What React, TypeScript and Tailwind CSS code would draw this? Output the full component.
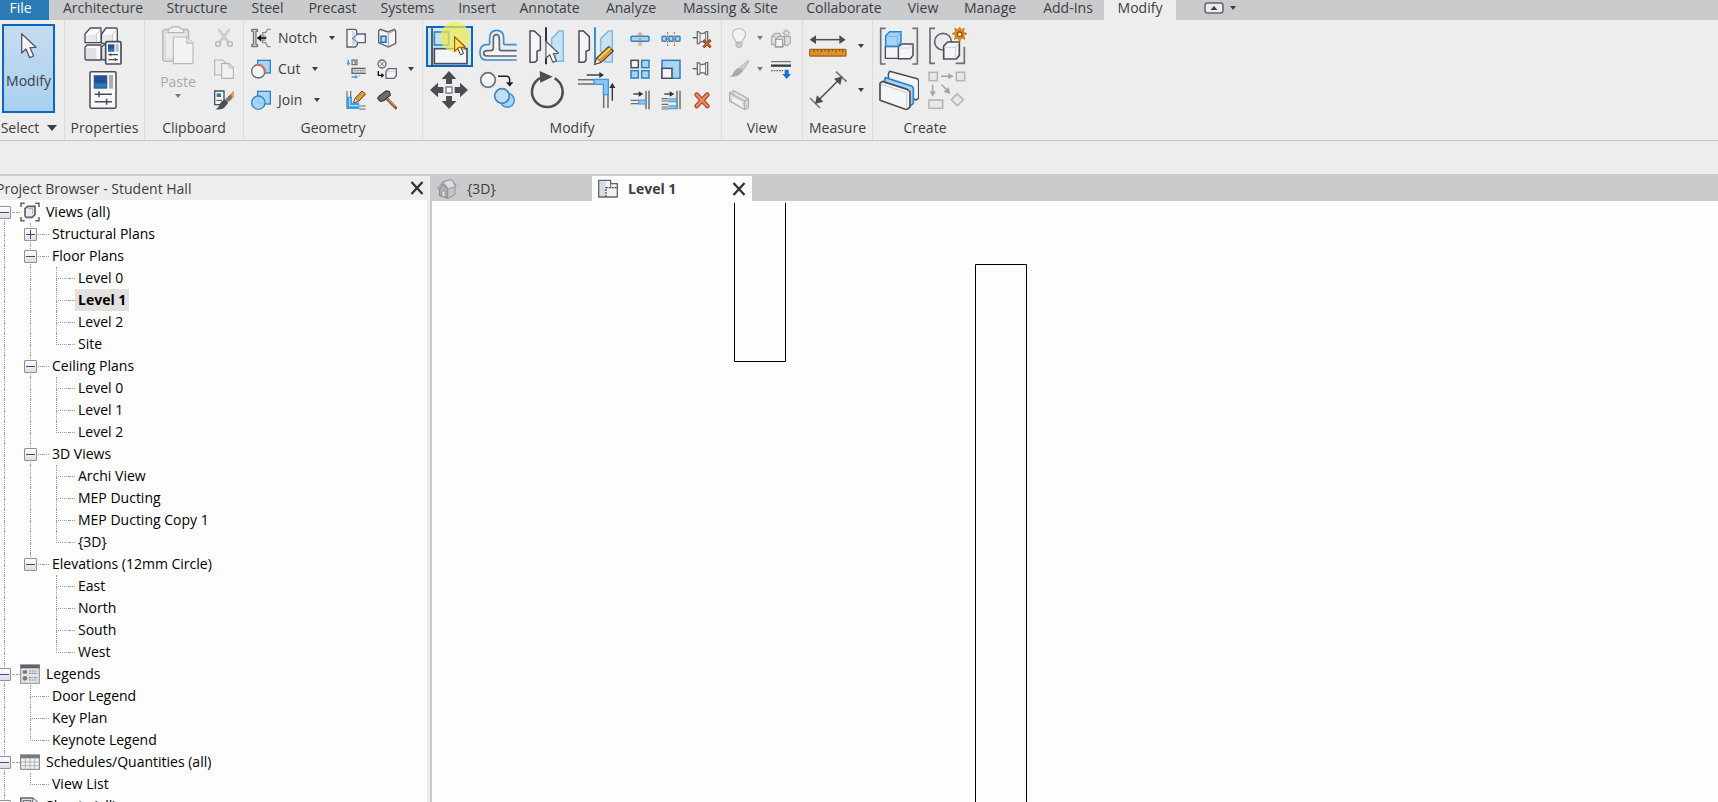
import type { ReactNode } from "react";

const INK = "#4a4d54";
const BLUE = "#2a86d0";
const SKY = "#a9d3f3";
const PALE = "#f4f5f8";
const MUTE = "#b4b4b4";

type IconProps = { children: ReactNode };

const Large = ({ children }: IconProps) => (
  <svg viewBox="0 0 120 120" className="block size-10 shrink-0" fill="none" aria-hidden="true">
    {children}
  </svg>
);

const Small = ({ children }: IconProps) => (
  <svg viewBox="0 0 60 60" className="block size-5 shrink-0" fill="none" aria-hidden="true">
    {children}
  </svg>
);

const Caret = ({ dim = false, wide = false }: { dim?: boolean; wide?: boolean }) => (
  <svg
    viewBox="0 0 10 6"
    className={wide ? "block h-[6px] w-[10px] shrink-0" : "block h-1 w-[6px] shrink-0"}
    preserveAspectRatio="none"
    aria-hidden="true"
  >
    <path d="M0 0H10L5 6Z" fill={dim ? "#77797d" : "#3b3d42"} />
  </svg>
);

const Pointer = ({ fill = "#f6f6f6" }: { fill?: string }) => (
  <path
    d="M2 2V60L15 48L26 74L38 69L27 44L45 43Z"
    fill={fill}
    stroke="#55585e"
    strokeWidth="4"
    strokeLinejoin="round"
  />
);

/* ---------- large icons ---------- */

const TypePropertiesIcon = () => (
  <Large>
    <g fill="#fbfbfc" stroke={INK} strokeWidth="4" strokeLinejoin="round">
      <path d="M6 24L22 6H54V50H6Z" />
      <path d="M56 24L69 6H98Q103 6 103 12V52H56Z" />
      <path d="M6 64L12 57H54V102H12Q6 102 6 96Z" />
      <path d="M56 64L62 57H100V102H62Q56 102 56 96Z" />
    </g>
    <path d="M9 26H40V48H9ZM58 26H88V48H58Z" fill="#e9eaed" />
    <path d="M9 66H40V99H12L9 96ZM58 66H70V99H60Z" fill="#dfe1e5" />
    <path d="M40 26L52 12M40 26V48M88 26L100 12M88 26V46" stroke="#bfc2c8" strokeWidth="3" />
    <rect x="68" y="47" width="46" height="67" rx="4" fill="#fbfbfb" stroke={INK} strokeWidth="5" />
    <rect x="75" y="55" width="19" height="22" fill="#254f91" />
    <rect x="77" y="68" width="15" height="7" fill="#2a7ab5" />
    <rect x="98" y="54" width="9" height="23" fill="#b9bcc2" />
    <path d="M76 86H105M83 82V91M76 101H105M97 96V105" stroke={INK} strokeWidth="3.5" />
  </Large>
);

const PropertiesIcon = () => (
  <Large>
    <rect x="21" y="5" width="78" height="110" rx="4" fill="#f7f8fa" stroke={INK} strokeWidth="4.5" />
    <rect x="33" y="16" width="39" height="39" fill="#254f91" stroke="#5b6d8c" strokeWidth="2" />
    <path d="M35 40H70V53H35Z" fill="#2a7ab5" />
    <rect x="78" y="15" width="12" height="41" fill="#a9adb4" />
    <path d="M35 73H87M48 64V82M35 95H87M71 86V104" stroke={INK} strokeWidth="4.5" />
  </Large>
);

const PasteIcon = () => (
  <Large>
    <rect x="14" y="10" width="78" height="96" rx="7" fill="#dcdcdc" stroke="#b9b9b9" strokeWidth="4" />
    <rect x="24" y="20" width="58" height="76" fill="#ececec" />
    <path d="M30 20V12Q30 8 38 8Q40 2 53 2Q66 2 68 8Q77 8 77 12V20Z" fill="#f1f1f1" stroke="#b5b5b5" strokeWidth="3.5" />
    <path d="M46 33H86L105 52V113H46Z" fill="#f3f3f3" stroke="#b9b9b9" strokeWidth="3.5" />
    <path d="M86 33V52H105" fill="#e2e2e2" stroke="#b9b9b9" strokeWidth="3" />
  </Large>
);

const AlignIcon = () => (
  <Large>
    <path d="M6 4V116" stroke="#3f4248" strokeWidth="5" />
    <rect x="13" y="15" width="43" height="39" fill="#bfe0f6" stroke={BLUE} strokeWidth="5" />
    <rect x="13" y="65" width="98" height="45" fill={PALE} stroke={INK} strokeWidth="5" />
  </Large>
);

const OffsetIcon = () => (
  <Large>
    <path
      d="M116 56H82Q77 56 77 50V36Q77 13 56 13Q35 13 35 36V50Q35 56 29 56H26Q6 56 6 80Q6 102 26 102H116"
      stroke="#3f8fcd"
      strokeWidth="5"
    />
    <path
      d="M116 74H70Q64 74 64 67V40Q64 26 55 26Q46 26 46 40V66Q46 74 38 74H27Q17 74 17 82Q17 90 27 90H116"
      fill={PALE}
      stroke="#63666d"
      strokeWidth="5"
    />
  </Large>
);

const MirrorPickIcon = () => (
  <Large>
    <path d="M9 15H22L40 32V72L30 76V103L24 109H9Z" fill={PALE} stroke={INK} strokeWidth="4.5" />
    <path d="M109 15H96L74 38V72L86 80V106H109Z" fill="#c8e2f4" stroke="#7dbbe6" strokeWidth="4.5" />
    <path d="M57 4V46M57 96V115" stroke="#303237" strokeWidth="6" />
    <g transform="translate(55 44) scale(0.88)">
      <Pointer />
    </g>
  </Large>
);

const MirrorDrawIcon = () => (
  <Large>
    <path d="M9 15H22L40 32V72L30 76V103L24 109H9Z" fill={PALE} stroke={INK} strokeWidth="4.5" />
    <path d="M109 15H98L74 38V76L86 84V108H109Z" fill="#c8e2f4" stroke="#7dbbe6" strokeWidth="4.5" />
    <path d="M57 4V112" stroke="#3f8fcd" strokeWidth="6" />
    <path d="M56 115L62 96L98 62L112 75L76 109Z" fill="#e79a2b" stroke="#5a4526" strokeWidth="3.5" />
    <path d="M68 98L103 66" stroke="#ffd77c" strokeWidth="4" />
    <path d="M56 115L62 96L76 109Z" fill="#f7e7c8" stroke="#4a4d54" strokeWidth="3" />
  </Large>
);

const MoveIcon = () => (
  <Large>
    <g fill={INK}>
      <path d="M60 3L82 27H69V42H51V27H38Z" />
      <path d="M60 117L82 93H69V78H51V93H38Z" />
      <path d="M3 60L27 38V51H43V69H27V82Z" />
      <path d="M117 60L93 38V51H77V69H93V82Z" />
    </g>
    <rect x="51" y="51" width="18" height="18" fill="#fff" stroke="#74777d" strokeWidth="4" />
  </Large>
);

const CopyIcon = () => (
  <Large>
    <circle cx="30" cy="30" r="22" fill="#f3f3f5" stroke="#6a6d73" strokeWidth="5" />
    <path d="M60 19H86Q95 19 95 28V40" stroke="#222" strokeWidth="4.5" />
    <path d="M84 37H106L95 50Z" fill="#222" />
    <circle cx="88" cy="91" r="21" fill={SKY} stroke="#3f95d6" strokeWidth="4.5" />
    <circle cx="72" cy="78" r="22" fill="#c0dff5" stroke="#3f85bf" strokeWidth="5" />
  </Large>
);

const RotateIcon = () => (
  <Large>
    <path d="M83 25A46 46 0 1 1 43 23" stroke={INK} strokeWidth="7.5" />
    <path d="M38 3L77 20L40 38Z" fill={INK} />
  </Large>
);

const TrimIcon = () => (
  <Large>
    <path d="M32 15H72" stroke="#303237" strokeWidth="4" />
    <path d="M70 6L84 15L70 24Z" fill="#303237" />
    <path d="M6 29H54M6 42H54M83 74V114M96 74V114" stroke="#6b6e74" strokeWidth="4.5" />
    <path d="M54 28H97V74H82V43H54Z" fill="#8cc6f0" stroke="#3c9be4" strokeWidth="4" />
    <path d="M109 92V52" stroke="#303237" strokeWidth="4" />
    <path d="M100 54L109 38L118 54Z" fill="#303237" />
  </Large>
);

const MeasureIcon = () => (
  <Large>
    <path d="M18 41H98" stroke={INK} strokeWidth="4.5" />
    <path d="M5 41L24 28V54ZM113 41L94 28V54Z" fill={INK} />
    <rect x="5" y="70" width="109" height="20" rx="2" fill="#dc9430" stroke="#a9691b" strokeWidth="4" />
    <path d="M18 70V79M29 70V76M40 70V79M51 70V76M62 70V79M73 70V76M84 70V79M95 70V76M104 70V79" stroke="#7a4a12" strokeWidth="3" />
  </Large>
);

const DimensionIcon = () => (
  <Large>
    <path d="M6 84L36 114M84 5L116 35" stroke="#707378" strokeWidth="4.5" />
    <path d="M30 92L92 30" stroke={INK} strokeWidth="4.5" />
    <path d="M21 102L27 76L46 95ZM103 19L97 45L78 26Z" fill={INK} />
  </Large>
);

const GroupIcon = () => (
  <Large>
    <path d="M20 7H5V114H20M100 7H115V114H100" stroke="#6d7076" strokeWidth="5" />
    <path d="M19 62H60V97H19Z" fill={PALE} stroke={INK} strokeWidth="4" />
    <path d="M58 62L70 54H102V88L94 98H58Z" fill={PALE} stroke={INK} strokeWidth="4.5" />
    <path d="M59 66H92L101 56" stroke="#d3d5d9" strokeWidth="3" />
    <path d="M20 29L32 17H66V49L57 61H20Z" fill={SKY} stroke={BLUE} strokeWidth="4.5" />
    <path d="M21 31H55L65 19M55 31V60" stroke="#6db5e8" strokeWidth="3" />
  </Large>
);

const AssemblyIcon = () => (
  <Large>
    <path d="M24 7H9V112H24M86 112H112V62" stroke="#6d7076" strokeWidth="5" />
    <circle cx="48" cy="47" r="25" fill="#e9ebee" stroke="#63666c" strokeWidth="5" />
    <path d="M50 60L62 48H97V88L88 99H50Z" fill={PALE} stroke={INK} strokeWidth="5" />
    <path d="M52 64H85L96 50M86 64V97" stroke="#cfd2d7" strokeWidth="3" />
    <path
      d="M98 3L102 12L112 7L109 18L121 23L110 28L114 40L103 36L98 47L93 36L82 40L86 28L75 23L86 18L83 7L94 12Z"
      fill="#e58a1c"
      stroke="#b9650e"
      strokeWidth="2"
    />
    <circle cx="98" cy="25" r="7" fill="#fff3b8" stroke="#a04b0a" strokeWidth="4" />
  </Large>
);

const PartsIcon = () => (
  <Large>
    <path d="M28 12L32 4L115 26L119 32V84L112 90L30 62Z" fill={PALE} stroke={INK} strokeWidth="4.5" strokeLinejoin="round" />
    <path d="M17 30L19 23L98 48L103 54V100L96 106L20 76Z" fill={SKY} stroke={BLUE} strokeWidth="5" strokeLinejoin="round" />
    <path d="M3 40L10 34L85 58L93 65V111L83 119L3 91Z" fill={PALE} stroke={INK} strokeWidth="5" strokeLinejoin="round" />
    <path d="M5 42L83 68V117M83 68L91 62" stroke="#c9ccd2" strokeWidth="3" />
  </Large>
);

const SimilarIcon = () => (
  <Large>
    <g fill="#e8e8e8" stroke={MUTE} strokeWidth="4.5">
      <rect x="6" y="7" width="25" height="25" />
      <rect x="88" y="7" width="25" height="25" />
      <rect x="6" y="90" width="41" height="25" />
      <path d="M91 71L109 89L91 107L73 89Z" />
    </g>
    <path d="M42 19H66M17 44V66M44 44L60 60" stroke="#a4a4a4" strokeWidth="4.5" />
    <path d="M64 10L80 19L64 28ZM8 64H26L17 80ZM70 72L50 66L65 52Z" fill="#a4a4a4" />
  </Large>
);

/* ---------- small icons ---------- */

const ScissorsIcon = () => (
  <Small>
    <path d="M14 4L42 42M46 4L18 42" stroke="#bdbdbd" strokeWidth="7" />
    <path d="M15 6L40 40M45 6L20 40" stroke="#ececec" strokeWidth="2" />
    <circle cx="12" cy="48" r="7" stroke={MUTE} strokeWidth="4" />
    <circle cx="48" cy="48" r="7" stroke={MUTE} strokeWidth="4" />
  </Small>
);

const CopyClipIcon = () => (
  <Small>
    <path d="M2 3H26L36 13V48H2Z" fill="#ededed" stroke={MUTE} strokeWidth="3.5" />
    <path d="M23 14H46L58 26V58H23Z" fill="#f2f2f2" stroke={MUTE} strokeWidth="3.5" />
    <path d="M45 14V27H58" stroke={MUTE} strokeWidth="3" />
  </Small>
);

const MatchTypeIcon = () => (
  <Small>
    <path d="M2 3H30V40L26 44H2Z" fill="#f7f8fa" stroke={INK} strokeWidth="4" />
    <rect x="8" y="10" width="13" height="11" fill="#2a7ab5" />
    <path d="M7 31H24" stroke={INK} strokeWidth="3" />
    <path d="M59 3L38 26L46 35L60 20Z" fill="#d98734" />
    <path d="M60 3V16L42 36L34 28Z" fill="#707378" />
    <path d="M50 12L60 3V22L56 24Z" fill="#ee9a4a" />
    <path d="M33 28L43 38L30 54Q20 60 4 58Q14 54 16 46Q20 34 33 28Z" fill="#4c4f55" />
  </Small>
);

const NotchIcon = () => (
  <Small>
    <path d="M2 4H20V10H15V50H20V56H2V50H7V10H2Z" fill="#c9cbcf" stroke="#5b5e64" strokeWidth="3" />
    <path d="M59 4H50L44 14H35V24H44M59 56H50L44 44H35V36H44" stroke="#8b8e94" strokeWidth="4" />
    <path d="M20 30H46" stroke="#111" strokeWidth="5" />
    <path d="M18 30L31 19V41Z" fill="#111" />
  </Small>
);

const CutIcon = () => (
  <Small>
    <rect x="20" y="4" width="38" height="38" fill={SKY} stroke={BLUE} strokeWidth="4" />
    <circle cx="22" cy="37" r="20" fill="#f6f6f8" stroke="#63666c" strokeWidth="4" />
    <path d="M18 18Q40 16 41 42" stroke="#e8694a" strokeWidth="6" />
  </Small>
);

const JoinIcon = () => (
  <Small>
    <rect x="20" y="4" width="38" height="38" fill={SKY} stroke={BLUE} strokeWidth="4" />
    <circle cx="22" cy="38" r="20" fill={SKY} stroke={BLUE} strokeWidth="4" />
    <path d="M22 20V40H40" stroke="#8dc1ea" strokeWidth="3" />
  </Small>
);

const CopeIcon = () => (
  <Small>
    <path d="M3 4H28L32 8V18H58V44H34V50L28 57H3Z" fill={PALE} stroke="#5c5f65" strokeWidth="4" />
    <path d="M18 4L30 18V44L18 56" fill="#d4d7dc" />
    <path d="M34 20L20 31L34 42" stroke={BLUE} strokeWidth="3.5" strokeDasharray="6 2" />
  </Small>
);

const WallOpeningIcon = () => (
  <Small>
    <path d="M5 8L10 4L32 12L52 4L56 8V46L34 57L5 44Z" fill={PALE} stroke="#5c5f65" strokeWidth="4" />
    <path d="M34 16V55M34 16L54 8" stroke="#a4a8af" strokeWidth="3" />
    <path d="M12 25H27V43H12Z" fill="#b7dcf6" stroke="#2a6eb0" strokeWidth="4.5" />
  </Small>
);

const BeamJoinIcon = () => (
  <Small>
    <path d="M7 2V14M40 48V50M17 54H30" stroke="#3c9be4" strokeWidth="4" />
    <path d="M1 11H13L7 20ZM28 47L36 54L28 60Z" fill="#3c9be4" />
    <rect x="18" y="3" width="15" height="14" fill="#e5e6e9" stroke="#6b6e74" strokeWidth="3.5" />
    <path d="M23 7H28V15" stroke="#6b6e74" strokeWidth="3" />
    <path d="M59 28H18V43H59" fill="#d4d6da" stroke="#5c5f65" strokeWidth="4" />
    <path d="M25 35H59" stroke="#7c7f85" strokeWidth="3" strokeDasharray="5 3" />
  </Small>
);

const PaintIcon = () => (
  <Small>
    <circle cx="15" cy="15" r="12" fill="#e4e5e8" stroke="#6b6e74" strokeWidth="4" />
    <path d="M8 8L22 22M22 8L8 22" stroke="#8b8e94" strokeWidth="3" />
    <path d="M4 36V49H15" stroke="#111" strokeWidth="4" />
    <path d="M13 42L22 49L13 57Z" fill="#111" />
    <path d="M27 37L34 29H58V50L51 58H27Z" fill={PALE} stroke="#63666c" strokeWidth="4" />
    <path d="M29 38H50L57 31" stroke="#c4c7cc" strokeWidth="3" />
  </Small>
);

const WallJoinIcon = () => (
  <Small>
    <path d="M3 3V57M14 3V48H59M59 57H40" stroke="#6b6e74" strokeWidth="3.5" />
    <path d="M3 20V57H40V38H18V20Z" fill="#3c9be4" />
    <path d="M11 24V47H38" stroke="#b7dcf6" strokeWidth="3.5" />
    <path d="M23 38L28 24L48 3L59 12L38 34Z" fill="#e79a2b" stroke="#5a4526" strokeWidth="3" />
    <path d="M23 38L28 25L37 34Z" fill="#fff0d0" stroke="#5a4526" strokeWidth="2" />
  </Small>
);

const DemolishIcon = () => (
  <Small>
    <path d="M29 25L57 54" stroke="#8a5a2c" strokeWidth="9" strokeLinecap="round" />
    <path d="M30 24L55 50" stroke="#e3b06c" strokeWidth="3" />
    <path d="M2 25L8 17L27 3L37 5L40 15L20 32L10 34Z" fill="#6a6d73" stroke="#3d4046" strokeWidth="4" strokeLinejoin="round" />
  </Small>
);

const SplitIcon = ({ gap = false }: { gap?: boolean }) => (
  <Small>
    {gap ? (
      <g fill={SKY} stroke="#3487c4" strokeWidth="4.5">
        <rect x="3" y="25" width="13" height="15" rx="3" />
        <rect x="24" y="25" width="12" height="15" rx="1" />
        <rect x="43" y="25" width="14" height="15" rx="3" />
      </g>
    ) : (
      <rect x="3" y="25" width="54" height="15" rx="3" fill={SKY} stroke="#3487c4" strokeWidth="4.5" />
    )}
    <path d={gap ? "M20 12V54M40 12V54" : "M30 12V54"} stroke="#c26742" strokeWidth="3" strokeDasharray="6 3" />
    {!gap && <path d="M23 16L28 21M37 16L32 21M23 50L28 45M37 50L32 45" stroke="#c26742" strokeWidth="3" />}
  </Small>
);

const PinIcon = ({ off = false }: { off?: boolean }) => (
  <Small>
    <path d="M2 29H18" stroke="#5c5f65" strokeWidth="4" />
    <path
      d="M16 11H20Q24 17 30 17Q38 17 42 11H47V47H42Q38 41 30 41Q24 41 20 47H16Z"
      fill={PALE}
      stroke="#6b6e74"
      strokeWidth="4"
    />
    <path d="M24 17V41M41 14V44" stroke="#6b6e74" strokeWidth="3" />
    {off && (
      <>
        <path d="M34 36L56 58M56 36L34 58" stroke="#8e3f17" strokeWidth="8" />
        <path d="M36 38L54 56M54 38L36 56" stroke="#e8863d" strokeWidth="3" />
      </>
    )}
  </Small>
);

const ArrayIcon = () => (
  <Small>
    <rect x="3" y="4" width="22" height="22" fill={PALE} stroke={INK} strokeWidth="4.5" />
    <g fill={SKY} stroke="#2f7fbd" strokeWidth="4.5">
      <rect x="35" y="4" width="22" height="22" />
      <rect x="3" y="35" width="22" height="22" />
      <rect x="35" y="35" width="22" height="22" />
    </g>
  </Small>
);

const ScaleIcon = () => (
  <Small>
    <rect x="3" y="4" width="54" height="54" fill={SKY} stroke="#2f7fbd" strokeWidth="4.5" />
    <rect x="3" y="28" width="30" height="30" fill={PALE} stroke={INK} strokeWidth="4.5" />
  </Small>
);

const ExtendIcon = ({ many = false }: { many?: boolean }) => (
  <Small>
    <path d="M48 2V58M57 2V58" stroke="#5c5f65" strokeWidth="4" />
    <path d="M10 12H28" stroke="#303237" strokeWidth="4" />
    <path d="M26 4L40 12L26 20Z" fill="#303237" />
    {many ? (
      <>
        <path d="M2 26H22M2 33H22M2 43H22M2 51H22M2 57H22" stroke="#6b6e74" strokeWidth="3.5" />
        <path d="M22 27H46M22 34H46M22 48H46M22 55H46" stroke="#49a2e6" strokeWidth="5" />
      </>
    ) : (
      <>
        <path d="M2 31H26M2 41H26" stroke="#6b6e74" strokeWidth="4" />
        <rect x="26" y="30" width="22" height="12" fill="#8cc6f0" stroke="#3c9be4" strokeWidth="3" />
      </>
    )}
  </Small>
);

const DeleteIcon = () => (
  <Small>
    <path d="M14 14L46 48M46 14L14 48" stroke="#a5451f" strokeWidth="14" strokeLinecap="round" />
    <path d="M14 14L46 48M46 14L14 48" stroke="#f08a64" strokeWidth="7" strokeLinecap="round" />
  </Small>
);

const BulbIcon = () => (
  <Small>
    <path d="M20 42Q20 36 14 30Q8 22 12 12Q18 2 30 2Q42 2 48 12Q52 22 46 30Q40 36 40 42Z" fill="#f3f3f3" stroke="#c0c0c0" strokeWidth="3.5" />
    <path d="M21 44H39V54L34 59H26L21 54Z" fill="#c9c9c9" stroke={MUTE} strokeWidth="3" />
  </Small>
);

const BrushIcon = () => (
  <Small>
    <path d="M58 4L34 24L42 34L59 10Z" fill="#d0d0d0" stroke={MUTE} strokeWidth="3" />
    <path d="M32 26L42 36L30 48Q18 56 2 52Q12 48 14 40Q20 28 32 26Z" fill="#a8a8a8" />
  </Small>
);

const SectionBoxIcon = () => (
  <Small>
    <path d="M2 9L14 2L58 26V54L47 59L2 33Z" fill="#e2e2e2" stroke="#ababab" strokeWidth="3.5" strokeLinejoin="round" />
    <path d="M2 9L47 34V59M47 34L58 26" stroke="#ababab" strokeWidth="3.5" />
    <path d="M14 4V24L56 50M2 32L14 24" stroke="#b9b9b9" strokeWidth="3" />
    <path d="M9 19L40 37V49L9 31Z" fill="#f3f3f3" />
  </Small>
);

const DisplaceIcon = () => (
  <Small>
    <path d="M2 26L12 16H26L30 24M2 26V50H13M2 26H14" fill="#e0e0e0" stroke="#adadad" strokeWidth="4" />
    <path d="M44 26H59V44L50 52H42" fill="#e0e0e0" stroke="#adadad" strokeWidth="4" />
    <path d="M13 34L21 26H41V48L34 57H13Z" fill="#e8e8e8" stroke="#a4a4a4" strokeWidth="4" />
    <rect x="14" y="34" width="21" height="22" fill="#f3f3f3" stroke="#a4a4a4" strokeWidth="4" />
    <path d="M46 3V27M34 15H58M38 7L54 23M54 7L38 23" stroke="#b4b4b4" strokeWidth="4" />
    <circle cx="46" cy="15" r="5" fill="#f6f6f6" stroke="#b4b4b4" strokeWidth="2" />
  </Small>
);

const LineworkIcon = () => (
  <Small>
    <path d="M0 8H60" stroke="#5c5f65" strokeWidth="3" />
    <path d="M0 20H60" stroke="#3b3d42" strokeWidth="7" />
    <path d="M0 35H36" stroke="#5c5f65" strokeWidth="3.5" strokeDasharray="5 3" />
    <path d="M41 32H53V45H60L47 60L34 45H41Z" fill="#1373cf" />
  </Small>
);

/* ---------- ribbon parts ---------- */

function Tool({ label, children, className = "" }: { label: string; children: ReactNode; className?: string }) {
  return (
    <button type="button" aria-label={label} className={`flex items-center justify-center ${className}`}>
      {children}
    </button>
  );
}

function Panel({ title, className, children }: { title: ReactNode; className: string; children: ReactNode }) {
  return (
    <section className={`flex h-[119px] shrink-0 flex-col border-r border-[#dcdcdc] ${className}`}>
      <div className="flex h-24 items-start">{children}</div>
      <h2 className="flex h-6 items-center justify-center whitespace-nowrap pt-0.5 leading-[22px]">{title}</h2>
    </section>
  );
}

const tabs: [string, string][] = [
  ["Architecture", "w-[104px]"],
  ["Structure", "w-[84px]"],
  ["Steel", "w-[57px]"],
  ["Precast", "w-[73px]"],
  ["Systems", "w-[77px]"],
  ["Insert", "w-[62px]"],
  ["Annotate", "w-[83px]"],
  ["Analyze", "w-[80px]"],
  ["Massing & Site", "w-[119px]"],
  ["Collaborate", "w-[108px]"],
  ["View", "w-[50px]"],
  ["Manage", "w-[84px]"],
  ["Add-Ins", "w-[72px]"],
];

function MenuBar() {
  return (
    <nav className="flex h-5 shrink-0 bg-[#cacbcd] leading-4">
      <button type="button" className="w-[49px] bg-[#2a7ab5] pr-2 pb-1 text-center text-white">
        File
      </button>
      <div className="flex pl-0.5">
        {tabs.map(([name, width]) => (
          <button key={name} type="button" className={`${width} pb-1 text-center whitespace-nowrap`}>
            {name}
          </button>
        ))}
      </div>
      <button type="button" className="w-[72px] bg-[#ededed] pb-1 text-center">
        Modify
      </button>
      <button type="button" aria-label="Minimize ribbon" className="ml-7 flex items-center gap-1.5 pb-1">
        <svg viewBox="0 0 20 12" className="h-3 w-5" fill="none" aria-hidden="true">
          <rect x="1" y="1" width="18" height="10" rx="2.5" fill="#e9ebee" stroke="#63666c" strokeWidth="1.5" />
          <path d="M6.500 8L10 4L13.500 8Z" fill="#3b3d42" />
        </svg>
        <Caret />
      </button>
    </nav>
  );
}

function LabelledTool({ icon, label }: { icon: ReactNode; label: string }) {
  return (
    <button type="button" className="flex h-[31px] items-center">
      {icon}
      <span className="mr-3 ml-[7px]">{label}</span>
      <Caret />
    </button>
  );
}

function Ribbon() {
  return (
    <div className="flex h-[121px] shrink-0 border-b border-[#c6c6c6] bg-[#ededed]">
      <Panel
        className="w-[65px]"
        title={
          <button type="button" className="flex items-center gap-2 pr-1.5">
            Select <Caret wide />
          </button>
        }
      >
        <button
          type="button"
          className="mt-1 ml-0.5 flex h-[89px] w-[53px] flex-col items-center border-2 border-[#0a66c2] bg-linear-to-b from-[#c6dcf0] to-[#a9d0f0] pt-[7px]"
        >
          <svg viewBox="0 0 48 78" className="mb-2.5 h-[26px] w-4" fill="none" aria-hidden="true">
            <Pointer />
          </svg>
          <span className="leading-6">Modify</span>
        </button>
      </Panel>

      <Panel title="Properties" className="w-20">
        <div className="flex flex-1 flex-col items-center gap-1 pt-1.5 pr-1">
          <Tool label="Type Properties">
            <TypePropertiesIcon />
          </Tool>
          <Tool label="Properties">
            <PropertiesIcon />
          </Tool>
        </div>
      </Panel>

      <Panel title="Clipboard" className="w-[99px]">
        <button type="button" className="ml-[13px] flex w-10 flex-col items-center pt-1.5 text-[#a9a9a9]">
          <PasteIcon />
          <span className="mt-1 leading-6">Paste</span>
          <Caret dim />
        </button>
        <div className="ml-4 grid grid-cols-[20px] grid-rows-[repeat(3,31px)] pt-0.5">
          <Tool label="Cut to Clipboard">
            <ScissorsIcon />
          </Tool>
          <Tool label="Copy to Clipboard">
            <CopyClipIcon />
          </Tool>
          <Tool label="Match Type Properties">
            <MatchTypeIcon />
          </Tool>
        </div>
      </Panel>

      <Panel title="Geometry" className="w-[179px]">
        <div className="flex w-[95px] flex-col items-start pt-0.5 pl-[7px]">
          <LabelledTool icon={<NotchIcon />} label="Notch" />
          <LabelledTool icon={<CutIcon />} label="Cut" />
          <LabelledTool icon={<JoinIcon />} label="Join" />
        </div>
        <div className="ml-[7px] grid grid-cols-[20px_20px_6px] grid-rows-[repeat(3,31px)] gap-x-[11px] pt-0.5">
          <Tool label="Cope">
            <CopeIcon />
          </Tool>
          <Tool label="Wall Opening">
            <WallOpeningIcon />
          </Tool>
          <span />
          <Tool label="Beam/Column Joins">
            <BeamJoinIcon />
          </Tool>
          <Tool label="Paint">
            <PaintIcon />
          </Tool>
          <Tool label="Paint options">
            <Caret />
          </Tool>
          <Tool label="Wall Joins">
            <WallJoinIcon />
          </Tool>
          <Tool label="Demolish">
            <DemolishIcon />
          </Tool>
        </div>
      </Panel>

      <Panel title="Modify" className="w-[299px]">
        <div className="ml-px grid grid-cols-[repeat(4,49px)] grid-rows-[repeat(2,44px)] pt-1">
          <button
            type="button"
            aria-label="Align"
            className="relative mt-0.5 ml-0.5 flex h-[41px] items-center justify-center border-2 border-[#0a66c2] bg-[#cbe8f6]"
          >
            <AlignIcon />
            <span className="absolute -top-1.5 left-3 size-[30px] rounded-full bg-[#f2ee4a]/70" />
            <svg viewBox="0 0 48 78" className="absolute top-2 left-[26px] h-5 w-3" fill="none" aria-hidden="true">
              <path d="M2 2V60L15 48L26 74L38 69L27 44L45 43Z" fill="#fff" stroke="#2f3136" strokeWidth="4" />
              <path d="M2 2V60L20 44L45 43Z" fill="#f3ea58" stroke="#a8541c" strokeWidth="5" />
            </svg>
          </button>
          <Tool label="Offset">
            <OffsetIcon />
          </Tool>
          <Tool label="Mirror - Pick Axis">
            <MirrorPickIcon />
          </Tool>
          <Tool label="Mirror - Draw Axis">
            <MirrorDrawIcon />
          </Tool>
          <Tool label="Move">
            <MoveIcon />
          </Tool>
          <Tool label="Copy">
            <CopyIcon />
          </Tool>
          <Tool label="Rotate">
            <RotateIcon />
          </Tool>
          <Tool label="Trim/Extend to Corner">
            <TrimIcon />
          </Tool>
        </div>
        <div className="ml-1 grid grid-cols-[repeat(3,31px)] grid-rows-[repeat(3,31px)] pt-0.5">
          <Tool label="Split Element">
            <SplitIcon />
          </Tool>
          <Tool label="Split with Gap">
            <SplitIcon gap />
          </Tool>
          <Tool label="Unpin">
            <PinIcon off />
          </Tool>
          <Tool label="Array">
            <ArrayIcon />
          </Tool>
          <Tool label="Scale">
            <ScaleIcon />
          </Tool>
          <Tool label="Pin">
            <PinIcon />
          </Tool>
          <Tool label="Trim/Extend Single Element">
            <ExtendIcon />
          </Tool>
          <Tool label="Trim/Extend Multiple Elements">
            <ExtendIcon many />
          </Tool>
          <Tool label="Delete">
            <DeleteIcon />
          </Tool>
        </div>
      </Panel>

      <Panel title="View" className="w-[81px]">
        <div className="ml-[7px] grid grid-cols-[20px_6px_20px] grid-rows-[repeat(3,31px)] gap-x-2 pt-0.5">
          <Tool label="Hide in View">
            <BulbIcon />
          </Tool>
          <Tool label="Hide options">
            <Caret dim />
          </Tool>
          <Tool label="Displace Elements">
            <DisplaceIcon />
          </Tool>
          <Tool label="Override Graphics">
            <BrushIcon />
          </Tool>
          <Tool label="Override options">
            <Caret dim />
          </Tool>
          <Tool label="Linework">
            <LineworkIcon />
          </Tool>
          <Tool label="Selection Box">
            <SectionBoxIcon />
          </Tool>
        </div>
      </Panel>

      <Panel title="Measure" className="w-[70px]">
        <div className="ml-[5px] grid grid-cols-[40px_6px] grid-rows-[repeat(2,44px)] gap-x-2.5 pt-1">
          <Tool label="Measure">
            <MeasureIcon />
          </Tool>
          <Tool label="Measure options">
            <Caret />
          </Tool>
          <Tool label="Aligned Dimension">
            <DimensionIcon />
          </Tool>
          <Tool label="Dimension options">
            <Caret />
          </Tool>
        </div>
      </Panel>

      <Panel title="Create" className="w-[104px] border-r-0">
        <div className="ml-1.5 grid grid-cols-[repeat(2,40px)] grid-rows-[repeat(2,44px)] gap-x-2 pt-1">
          <Tool label="Create Group">
            <GroupIcon />
          </Tool>
          <Tool label="Create Assembly">
            <AssemblyIcon />
          </Tool>
          <Tool label="Create Parts">
            <PartsIcon />
          </Tool>
          <Tool label="Create Similar">
            <SimilarIcon />
          </Tool>
        </div>
      </Panel>
    </div>
  );
}

/* ---------- project browser ---------- */

const ViewsIcon = () => (
  <Small>
    <path d="M3 15V4H14M46 4H57V15M57 45V56H46M14 56H3V45" stroke="#5c5f65" strokeWidth="4.5" />
    <path d="M15 20L23 13H45V38L36 46H19L15 42Z" fill="#e9ebee" stroke="#5c5f65" strokeWidth="5" />
    <path d="M24 20H38V36" stroke="#a9adb4" strokeWidth="3" />
  </Small>
);

const LegendsIcon = () => (
  <Small>
    <rect x="2" y="3" width="56" height="55" fill="#e4e5e6" stroke="#8b8e94" strokeWidth="3" />
    <path d="M1 2H59V13H1Z" fill="#5f6268" />
    <rect x="8" y="19" width="13" height="10" fill="#777a80" />
    <circle cx="15" cy="43" r="7" fill="#777a80" />
    <path d="M27 21H52M27 28H52M27 41H38M42 41H52M27 48H52" stroke="#8b8e94" strokeWidth="3.5" strokeDasharray="6 2" />
  </Small>
);

const SchedulesIcon = () => (
  <Small>
    <rect x="2" y="9" width="56" height="43" fill="#f2f2f3" stroke="#777a80" strokeWidth="3" />
    <path d="M1 8H59V19H1Z" fill="#777a80" />
    <path d="M2 30H58M2 41H58M16 19V52M30 19V52M44 19V52" stroke="#b0b3b8" strokeWidth="3" />
  </Small>
);

const SheetsIcon = () => (
  <Small>
    <path d="M2 6H38L58 24V58H2Z" fill="#e3e5e8" stroke="#63666c" strokeWidth="5" />
    <path d="M10 14H32V40H10ZM38 6V24H58" fill="#f6f6f6" stroke="#777a80" strokeWidth="4" />
  </Small>
);

type Node = { name: string; icon?: ReactNode; closed?: boolean; active?: boolean; items?: Node[] };

const leaves = (...names: string[]): Node[] => names.map((name) => ({ name }));

const tree: Node[] = [
  {
    name: "Views (all)",
    icon: <ViewsIcon />,
    items: [
      { name: "Structural Plans", closed: true, items: [] },
      {
        name: "Floor Plans",
        items: [{ name: "Level 0" }, { name: "Level 1", active: true }, { name: "Level 2" }, { name: "Site" }],
      },
      { name: "Ceiling Plans", items: leaves("Level 0", "Level 1", "Level 2") },
      { name: "3D Views", items: leaves("Archi View", "MEP Ducting", "MEP Ducting Copy 1", "{3D}") },
      { name: "Elevations (12mm Circle)", items: leaves("East", "North", "South", "West") },
    ],
  },
  { name: "Legends", icon: <LegendsIcon />, items: leaves("Door Legend", "Key Plan", "Keynote Legend") },
  { name: "Schedules/Quantities (all)", icon: <SchedulesIcon />, items: leaves("View List") },
  { name: "Sheets (all)", icon: <SheetsIcon />, items: [] },
];

function Guide({ up, down, across }: { up: boolean; down: boolean; across: boolean }) {
  return (
    <span className="col-start-1 row-start-1 flex flex-col pl-[13px]">
      <span
        className={`h-3 border-dotted border-[#9a9a9a] ${up ? "border-l" : ""} ${across ? "border-b" : ""}`}
      />
      <span className={`h-2.5 border-dotted border-[#9a9a9a] ${down ? "border-l" : ""}`} />
    </span>
  );
}

function Branch({ node, trail, last, first }: { node: Node; trail: boolean[]; last: boolean; first: boolean }) {
  return (
    <li>
      <div className="flex h-[22px] items-center">
        {trail.map((open, i) => (
          <span key={i} className="grid w-[26px] shrink-0">
            <Guide up={open} down={open} across={false} />
          </span>
        ))}
        <span className="grid w-[26px] shrink-0">
          <Guide up={!first} down={!last} across />
          {node.items && (
            <button
              type="button"
              aria-label={node.closed ? "Expand" : "Collapse"}
              className="col-start-1 row-start-1 flex size-[13px] items-center justify-center place-self-center rounded-[1px] border border-[#919191] bg-linear-to-b from-white to-[#dedede]"
            >
              <svg viewBox="0 0 9 9" className="size-[9px]" aria-hidden="true">
                <path d={node.closed ? "M0 4H9V5H0ZM4 0H5V9H4Z" : "M0 4H9V5H0Z"} fill="#2e4f8f" />
              </svg>
            </button>
          )}
        </span>
        <span
          className={`h-3 shrink-0 self-start border-b border-dotted border-[#9a9a9a] ${node.icon ? "w-[3px]" : "w-1.5"}`}
        />
        {node.icon}
        <a
          href="#view"
          className={`whitespace-nowrap leading-[22px] ${node.icon ? "pl-1.5" : "px-[3px]"} ${node.active ? "bg-[#e3e1df] font-bold" : ""}`}
        >
          {node.name}
        </a>
      </div>
      {node.items && node.items.length > 0 && (
        <ul>
          {node.items.map((item, i) => (
            <Branch
              key={item.name}
              node={item}
              trail={[...trail, !last]}
              last={i === node.items!.length - 1}
              first={false}
            />
          ))}
        </ul>
      )}
    </li>
  );
}

const Close = () => (
  <svg viewBox="0 0 14 14" className="size-3.5" aria-hidden="true">
    <path d="M1.500 1L12.500 13M12.500 1L1.500 13" stroke="#333" strokeWidth="2.300" />
  </svg>
);

function ProjectBrowser() {
  return (
    <aside className="flex w-[430px] shrink-0 flex-col bg-[#ededed] pr-[3px]">
      <header className="-ml-1 flex h-6 shrink-0 items-center justify-between pr-[3px]">
        <h2>Project Browser - Student Hall</h2>
        <button type="button" aria-label="Close project browser">
          <Close />
        </button>
      </header>
      <div className="min-h-0 flex-1 overflow-hidden bg-[#fdfdfd] pt-px text-black">
        <ul className="-ml-[9px]">
          {tree.map((node, i) => (
            <Branch key={node.name} node={node} trail={[]} first={i === 0} last={i === tree.length - 1} />
          ))}
        </ul>
      </div>
    </aside>
  );
}

function Drawing() {
  return (
    <main className="flex min-w-0 flex-1 flex-col border-l-2 border-[#cacbcd] bg-[#fdfdfd]">
      <div className="flex h-[25px] shrink-0 bg-[#cacbcd]">
        <button type="button" className="flex w-40 items-center gap-2.5 pl-[5px]">
          <Small>
            <path d="M2 28L18 8L44 2L58 20L54 24V46L34 58L8 50V30Z" fill="#c3c5c8" stroke="#909296" strokeWidth="3" strokeLinejoin="round" />
            <path d="M18 8L34 30L56 22L44 2Z" fill="#dcdddf" stroke="#909296" strokeWidth="2.5" />
            <path d="M8 30L18 14L32 32V57L8 50Z" fill="#b0b2b6" stroke="#86888d" strokeWidth="3" />
            <path d="M15 36H24V55L15 52Z" fill="#dfe0e2" stroke="#86888d" strokeWidth="2" />
          </Small>
          {"{3D}"}
        </button>
        <div className="flex w-40 items-center bg-[#fdfdfd] pr-1.5 pl-1.5">
          <button type="button" className="flex flex-1 items-center gap-2.5 font-bold">
            <Small>
              <path d="M2 4H38V12H58V54H2Z" fill="#f1f2f4" />
              <path d="M2 4H24V54H2Z" fill="#d5dde4" />
              <path d="M38 14V4H2V54H58V14Z" stroke="#63666c" strokeWidth="4" strokeLinejoin="round" />
              <path d="M24 54V26H56" stroke="#3f4248" strokeWidth="3.5" strokeDasharray="6 3" />
              <path d="M38 14V26" stroke="#63666c" strokeWidth="3" />
            </Small>
            Level 1
          </button>
          <button type="button" aria-label="Close Level 1">
            <Close />
          </button>
        </div>
      </div>
      <svg className="mt-0.5 block min-h-0 w-full flex-1" fill="none" stroke="#000" role="img" aria-label="Level 1 plan">
        <path d="M302.500 0V158.500H353.500V0" />
        <path d="M543.500 2000V61.500H594.500V2000" />
      </svg>
    </main>
  );
}

export default function App() {
  return (
    <div className="flex h-screen flex-col overflow-hidden bg-[#ededed] font-['Open_Sans','Noto_Sans',sans-serif] text-[14px] text-[#3c3e42]">
      <MenuBar />
      <Ribbon />
      <div className="h-[33px] shrink-0" />
      <div className="flex min-h-0 flex-1 border-t-2 border-[#cacbcd]">
        <ProjectBrowser />
        <Drawing />
      </div>
    </div>
  );
}
